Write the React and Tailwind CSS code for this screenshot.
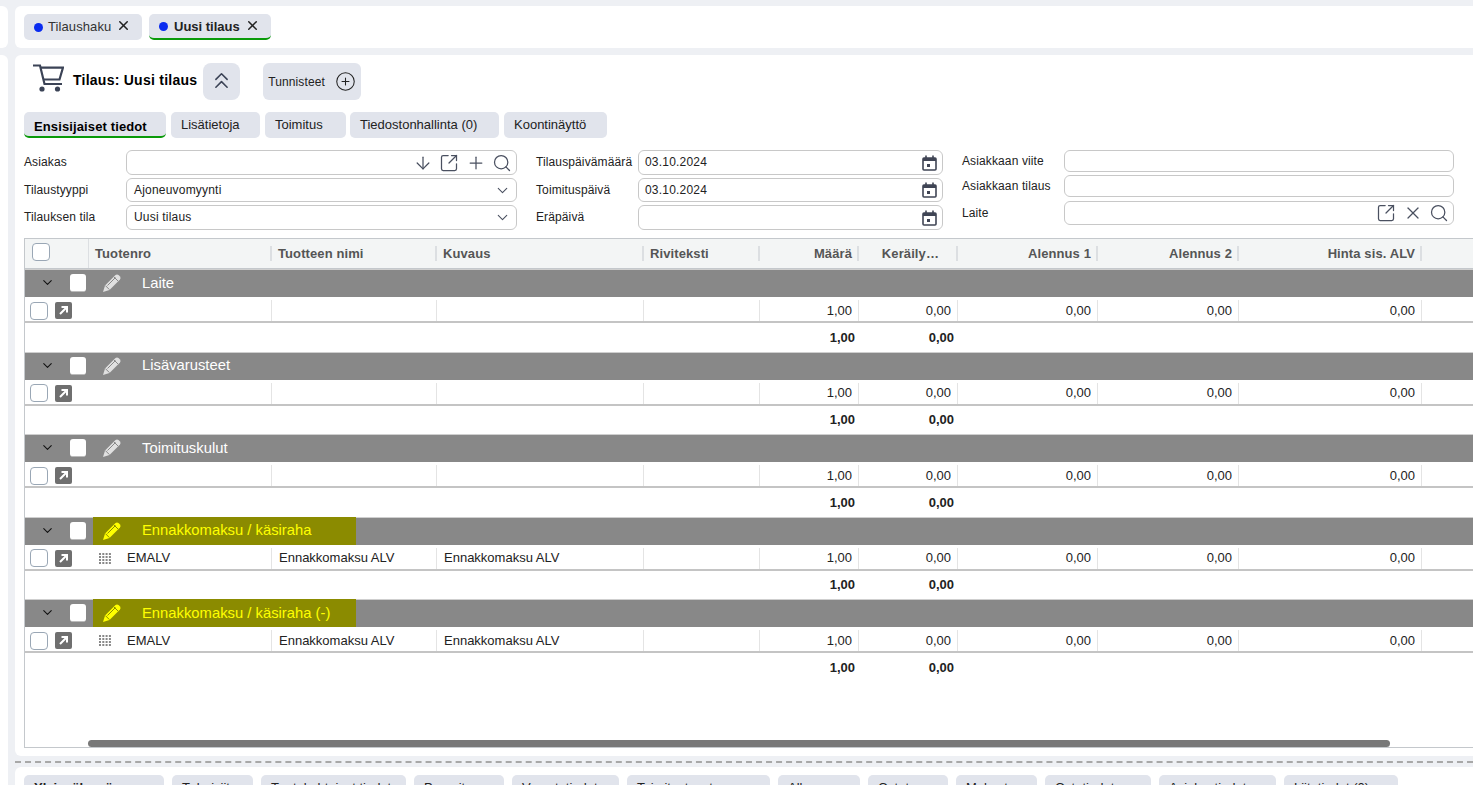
import React from "react";
import { ArrowDown, Plus, Search, ChevronDown, X, ChevronsUp, CirclePlus, SquareArrowOutUpRight } from "lucide-react";

const headCols = [
  ["Tuotenro", "w-[183px]", "pl-[6px]"], ["Tuotteen nimi", "w-[165px]", "pl-[6px]"], ["Kuvaus", "w-[207px]", "pl-[6px]"], ["Riviteksti", "w-[116px]", "pl-[6px]"],
  ["Määrä", "w-[99px]", "justify-end pr-[5px]"], ["Keräily…", "w-[99px]", "justify-end pr-[17px]"], ["Alennus 1", "w-[140px]", "justify-end pr-[5px]"], ["Alennus 2", "w-[141px]", "justify-end pr-[5px]"], ["Hinta sis. ALV", "w-[183px]", "justify-end pr-[5px]"],
];

const sections = [
  { name: "Laite" },
  { name: "Lisävarusteet" },
  { name: "Toimituskulut" },
  { name: "Ennakkomaksu / käsiraha", hi: true, code: "EMALV", item: "Ennakkomaksu ALV" },
  { name: "Ennakkomaksu / käsiraha (-)", hi: true, code: "EMALV", item: "Ennakkomaksu ALV" },
];

function Pencil({ hi }) {
  const fill = hi ? "#ffff00" : "#e0e0e0";
  const line = hi ? "#8b8b00" : "#888888";
  return (
    <svg width="20" height="20" viewBox="0 0 20 20" className="shrink-0">
      <path d="M1 19 L3 12.5 L13.5 2 Q15 .8 16.5 2 L18 3.5 Q19.2 5 18 6.5 L7.5 17 Z" fill={fill} />
      <path d="M3.4 12.6 L7.4 16.6 M12 4 L16 8 M5.5 12.5 L13.5 4.5" stroke={line} strokeWidth="1" fill="none" />
    </svg>
  );
}

function Cart() {
  return (
    <svg width="31" height="29" viewBox="0 0 31 29" fill="none" stroke="#3b4356" strokeWidth="2.2" className="ml-[9px] mt-[1px] shrink-0">
      <path d="M0 1.5 H7 L11.5 20 H29" />
      <path d="M8 3.6 H30 L26.5 15.5 H10.5" />
      <circle cx="9" cy="25" r="2.6" fill="#3b4356" stroke="none" />
      <circle cx="24.5" cy="25" r="2.6" fill="#3b4356" stroke="none" />
    </svg>
  );
}

function Cal() {
  return (
    <svg width="15" height="16" viewBox="0 0 15 16" className="mr-[1px] shrink-0 text-[#3f4454]" fill="none" stroke="currentColor">
      <rect x="1" y="3" width="13" height="12" rx="1" strokeWidth="1.6" />
      <rect x="1" y="3" width="13" height="3" fill="currentColor" strokeWidth="0" />
      <path d="M4 0.5 V3 M11 0.5 V3" strokeWidth="1.6" />
      <rect x="5" y="9" width="3" height="3" fill="currentColor" stroke="none" />
    </svg>
  );
}

function Field({ label, h, children, icons, pl = "pl-[7px]" }) {
  return (
    <div className="flex items-center">
      <div className="w-[102px] -mt-[1px] shrink-0 text-[12px] tracking-[0.12px] text-[#222]">{label}</div>
      <div className={`${h} flex-1 flex items-center justify-between rounded-[6px] border border-[#c8c8c8] bg-white ${pl} pr-[4px] text-[12px] tracking-[0.2px] text-[#222]`}>
        <span className="-mt-[1px]">{children}</span>
        {icons && <span className="flex items-center gap-[6.5px] text-[#4a5060]">{icons}</span>}
      </div>
    </div>
  );
}

const sz = { size: 20, strokeWidth: 1.5 };

function Tab({ children, w, active }) {
  return (
    <div className={`${w} h-[26px] shrink-0 rounded-[5px] bg-[#e1e4ec] pl-[10px] text-[13px] text-[#222] ${active ? "leading-[29px] border-b-2 border-[#0a9a0a] font-bold tracking-[0.12px] text-black" : "leading-[26px]"}`}>
      {children}
    </div>
  );
}

function DataCell({ w, children, right, pl }) {
  return (
    <div className={`${w} shrink-0 h-full border-r border-[#e4e4e4] flex items-center whitespace-nowrap text-[13px] text-[#222] ${right ? "justify-end pr-[6px]" : ""} ${pl || ""}`}>
      {children}
    </div>
  );
}

function Section({ s }) {
  return (
    <div className="w-[1600px]">
      <div className="h-[28px] bg-[#888888] flex items-start border-t border-[#cfcfcf]">
        <ChevronDown size={15} strokeWidth={1.7} className="ml-[15px] mt-[5px] text-[#111]" />
        <div className="ml-[15px] mt-[4px] w-[16px] h-[18px] rounded-[3px] bg-white border-b border-[#bbb]" />
        <div className={`ml-[7px] -mt-[1px] h-[28px] w-[263px] flex items-center pl-[9px] text-[14.8px] ${s.hi ? "bg-[#8b8b00] text-[#ffff00]" : "text-white"}`}>
          <Pencil hi={s.hi} />
          <span className="ml-[20px] whitespace-nowrap">{s.name}</span>
        </div>
      </div>
      <div className="h-[26px] flex items-center border-b-2 border-[#c4c4c4] pt-[3px]">
        <div className="w-[65px] shrink-0 flex items-center pl-[5px] gap-[7px]">
          <div className="w-[18px] h-[18px] rounded-[4px] border border-[#9aa7b5] bg-white" />
          <div className="w-[17px] h-[17px] rounded-[2px] bg-[#6f6f6f] flex items-center justify-center text-white">
            <svg width="11" height="11" viewBox="0 0 11 11"><path d="M2 9 L9 2 M3.5 2 H9 V7.5" stroke="currentColor" strokeWidth="2" fill="none" /></svg>
          </div>
        </div>
        <DataCell w="w-[182px]" pl="pl-[9px]">
          {s.code && (
            <>
              <svg width="13" height="11" viewBox="0 0 13 11" className="mr-[15px]" fill="#888">
                {[0, 3.3, 6.6, 9.9].map((x) => [0, 3, 6, 9].map((y) => <rect key={`${x}-${y}`} x={x} y={y} width="2" height="2" />))}
              </svg>
              {s.code}
            </>
          )}
        </DataCell>
        <DataCell w="w-[165px]" pl="pl-[7px]">{s.item}</DataCell>
        <DataCell w="w-[207px]" pl="pl-[7px]">{s.item}</DataCell>
        <DataCell w="w-[116px]" />
        <DataCell w="w-[99px]" right>1,00</DataCell>
        <DataCell w="w-[99px]" right>0,00</DataCell>
        <DataCell w="w-[140px]" right>0,00</DataCell>
        <DataCell w="w-[141px]" right>0,00</DataCell>
        <DataCell w="w-[183px]" right>0,00</DataCell>
      </div>
      <div className="h-[28.5px] flex items-center text-[13px] font-bold text-[#222]">
        <div className="w-[835px] shrink-0 pr-[5px] text-right">1,00</div>
        <div className="w-[99px] shrink-0 pr-[5px] text-right">0,00</div>
      </div>
    </div>
  );
}

const bottomTabs = [
  ["Yleisnäkymä", "w-[140px]", true], ["Tuloriviit", "w-[81px]"], ["Tuotekohtaiset tiedot", "w-[145px]"], ["Paperit", "w-[90px]"],
  ["Varastotiedot", "w-[107px]"], ["Toimitustavat", "w-[143px]"], ["Alkuun", "w-[82px]"], ["Ostot", "w-[80px]"], ["Maksut", "w-[81px]"],
  ["Ostotiedot", "w-[106px]"], ["Asiakastiedot", "w-[117px]"], ["Liitetiedot (0)", "w-[114px]"],
];

export default function App() {
  return (
    <div className="h-[785px] w-[1473px] overflow-hidden bg-[#eef0f4] pt-[6px] font-['Liberation_Sans',Arial,sans-serif]">
      <div className="flex gap-[7px] h-[42px]">
        <div className="w-[8px] bg-white rounded-r-[6px]" />
        <div className="flex-1 bg-white rounded-l-[6px] pt-[8px] pl-[9px] flex gap-[7px]">
          <div className="w-[118px] h-[26px] rounded-[5px] bg-[#e1e4ec] flex items-center pl-[10px] text-[13px] tracking-[0.1px] text-[#333]">
            <span className="w-[9px] h-[9px] rounded-full bg-[#0a2cf0] mr-[5px]" />Tilaushaku
            <X size={15} strokeWidth={2.4} className="ml-[5px] -mt-[3px] text-[#222]" />
          </div>
          <div className="w-[122px] h-[26px] rounded-[5px] bg-[#e1e4ec] border-b-2 border-[#0a9a0a] flex items-center pl-[10px] text-[13px] font-bold text-[#222]">
            <span className="w-[9px] h-[9px] rounded-full bg-[#0a2cf0] mr-[6px]" /><span className="mt-[2px]">Uusi tilaus</span>
            <X size={15} strokeWidth={2.4} className="ml-[5px] -mt-[1px] text-[#222]" />
          </div>
        </div>
      </div>

      <div className="flex gap-[7px] h-[701px] mt-[7px]">
        <div className="w-[8px] bg-white rounded-tr-[6px]" />
        <div className="flex-1 bg-white rounded-l-[6px] pl-[9px] overflow-hidden">
          <div className="flex items-start pt-[8px] h-[57px]">
            <Cart />
            <div className="ml-[9px] mt-[7px] text-[14px] font-bold tracking-[0.25px] text-black whitespace-nowrap">Tilaus: Uusi tilaus</div>
            <div className="ml-[6px] w-[37px] h-[37px] rounded-[8px] bg-[#e1e4ec] flex items-center justify-center text-[#3b4356]">
              <ChevronsUp size={27} strokeWidth={1.4} className="-mt-[2px]" />
            </div>
            <div className="ml-[23px] w-[98px] h-[37px] rounded-[6px] bg-[#e1e4ec] flex items-center pl-[5px] text-[12px] tracking-[0.1px] text-[#222]">
              Tunnisteet
              <CirclePlus size={21} strokeWidth={1.2} className="ml-[10px]" />
            </div>
          </div>

          <div className="flex gap-[5px]">
            <Tab w="w-[142px]" active>Ensisijaiset tiedot</Tab>
            <Tab w="w-[89px]">Lisätietoja</Tab>
            <Tab w="w-[81px]">Toimitus</Tab>
            <div className="-ml-[1px]"><Tab w="w-[149px]">Tiedostonhallinta (0)</Tab></div>
            <Tab w="w-[103px]">Koontinäyttö</Tab>
          </div>

          <div className="flex mt-[12px] h-[88px]">
            <div className="w-[493px] flex flex-col gap-[3px]">
              <Field label="Asiakas" h="h-[25px]" icons={<><ArrowDown {...sz} /><SquareArrowOutUpRight {...sz} /><Plus {...sz} /><Search {...sz} /></>} />
              <Field label="Tilaustyyppi" h="h-[24px]" icons={<ChevronDown size={17} strokeWidth={1.5} className="mr-[1px]" />}>Ajoneuvomyynti</Field>
              <Field label="Tilauksen tila" h="h-[25px]" icons={<ChevronDown size={17} strokeWidth={1.5} className="mr-[1px]" />}>Uusi tilaus</Field>
            </div>
            <div className="ml-[19px] w-[407px] flex flex-col gap-[3px]">
              <Field label="Tilauspäivämäärä" h="h-[25px]" pl="pl-[6px]" icons={<Cal />}>03.10.2024</Field>
              <Field label="Toimituspäivä" h="h-[24px]" pl="pl-[6px]" icons={<Cal />}>03.10.2024</Field>
              <Field label="Eräpäivä" h="h-[25px]" pl="pl-[6px]" icons={<Cal />} />
            </div>
            <div className="ml-[19px] w-[492px] flex flex-col gap-[3px]">
              <Field label="Asiakkaan viite" h="h-[22px]" />
              <Field label="Asiakkaan tilaus" h="h-[22px]" />
              <div className="mt-[1px]">
                <Field label="Laite" h="h-[24px]" icons={<><SquareArrowOutUpRight {...sz} /><X {...sz} /><Search {...sz} /></>} />
              </div>
            </div>
          </div>

          <div className="h-[510px] border-l border-b border-[#c4c8cc] relative overflow-hidden">
            <div className="w-[1600px] h-[31px] flex items-center bg-[#f3f5f5] border-y border-[#c4c8cc]">
              <div className="w-[64px] h-full shrink-0 border-r border-[#dcdfe2] pl-[7px] flex items-center">
                <div className="w-[18px] h-[18px] rounded-[4px] border border-[#9aa7b5] bg-white -mt-[3px]" />
              </div>
              {headCols.map(([t, w, a]) => (
                <div key={t} className={`${w} ${a} shrink-0 h-[15px] flex items-center whitespace-nowrap border-r-2 border-[#dcdfe2] text-[13px] font-bold tracking-[0.1px] text-[#555]`}>
                  {t}
                </div>
              ))}
            </div>
            {sections.map((s) => <Section key={s.name} s={s} />)}
            <div className="absolute left-[63px] bottom-0 w-[1302px] h-[7px] rounded-full bg-[#787878]" />
          </div>
        </div>
      </div>

      <div className="h-[11px] flex gap-[7px]">
        <div className="w-[8px] bg-white" />
        <div className="flex-1 flex items-center">
          <div className="w-full border-t-2 border-dashed border-[#a8a8a8]" />
        </div>
      </div>
      <div className="flex gap-[7px] h-[40px]">
        <div className="w-[8px] bg-white" />
        <div className="flex-1 bg-white rounded-tl-[6px] pt-[8px] pl-[9px] flex gap-[8px]">
          {bottomTabs.map(([t, w, b]) => (
            <div key={t} className={`${w} h-[26px] shrink-0 rounded-[5px] bg-[#e1e4ec] pl-[10px] text-[13px] leading-[26px] text-[#222] ${b ? "font-bold" : ""}`}>{t}</div>
          ))}
        </div>
      </div>
    </div>
  );
}
